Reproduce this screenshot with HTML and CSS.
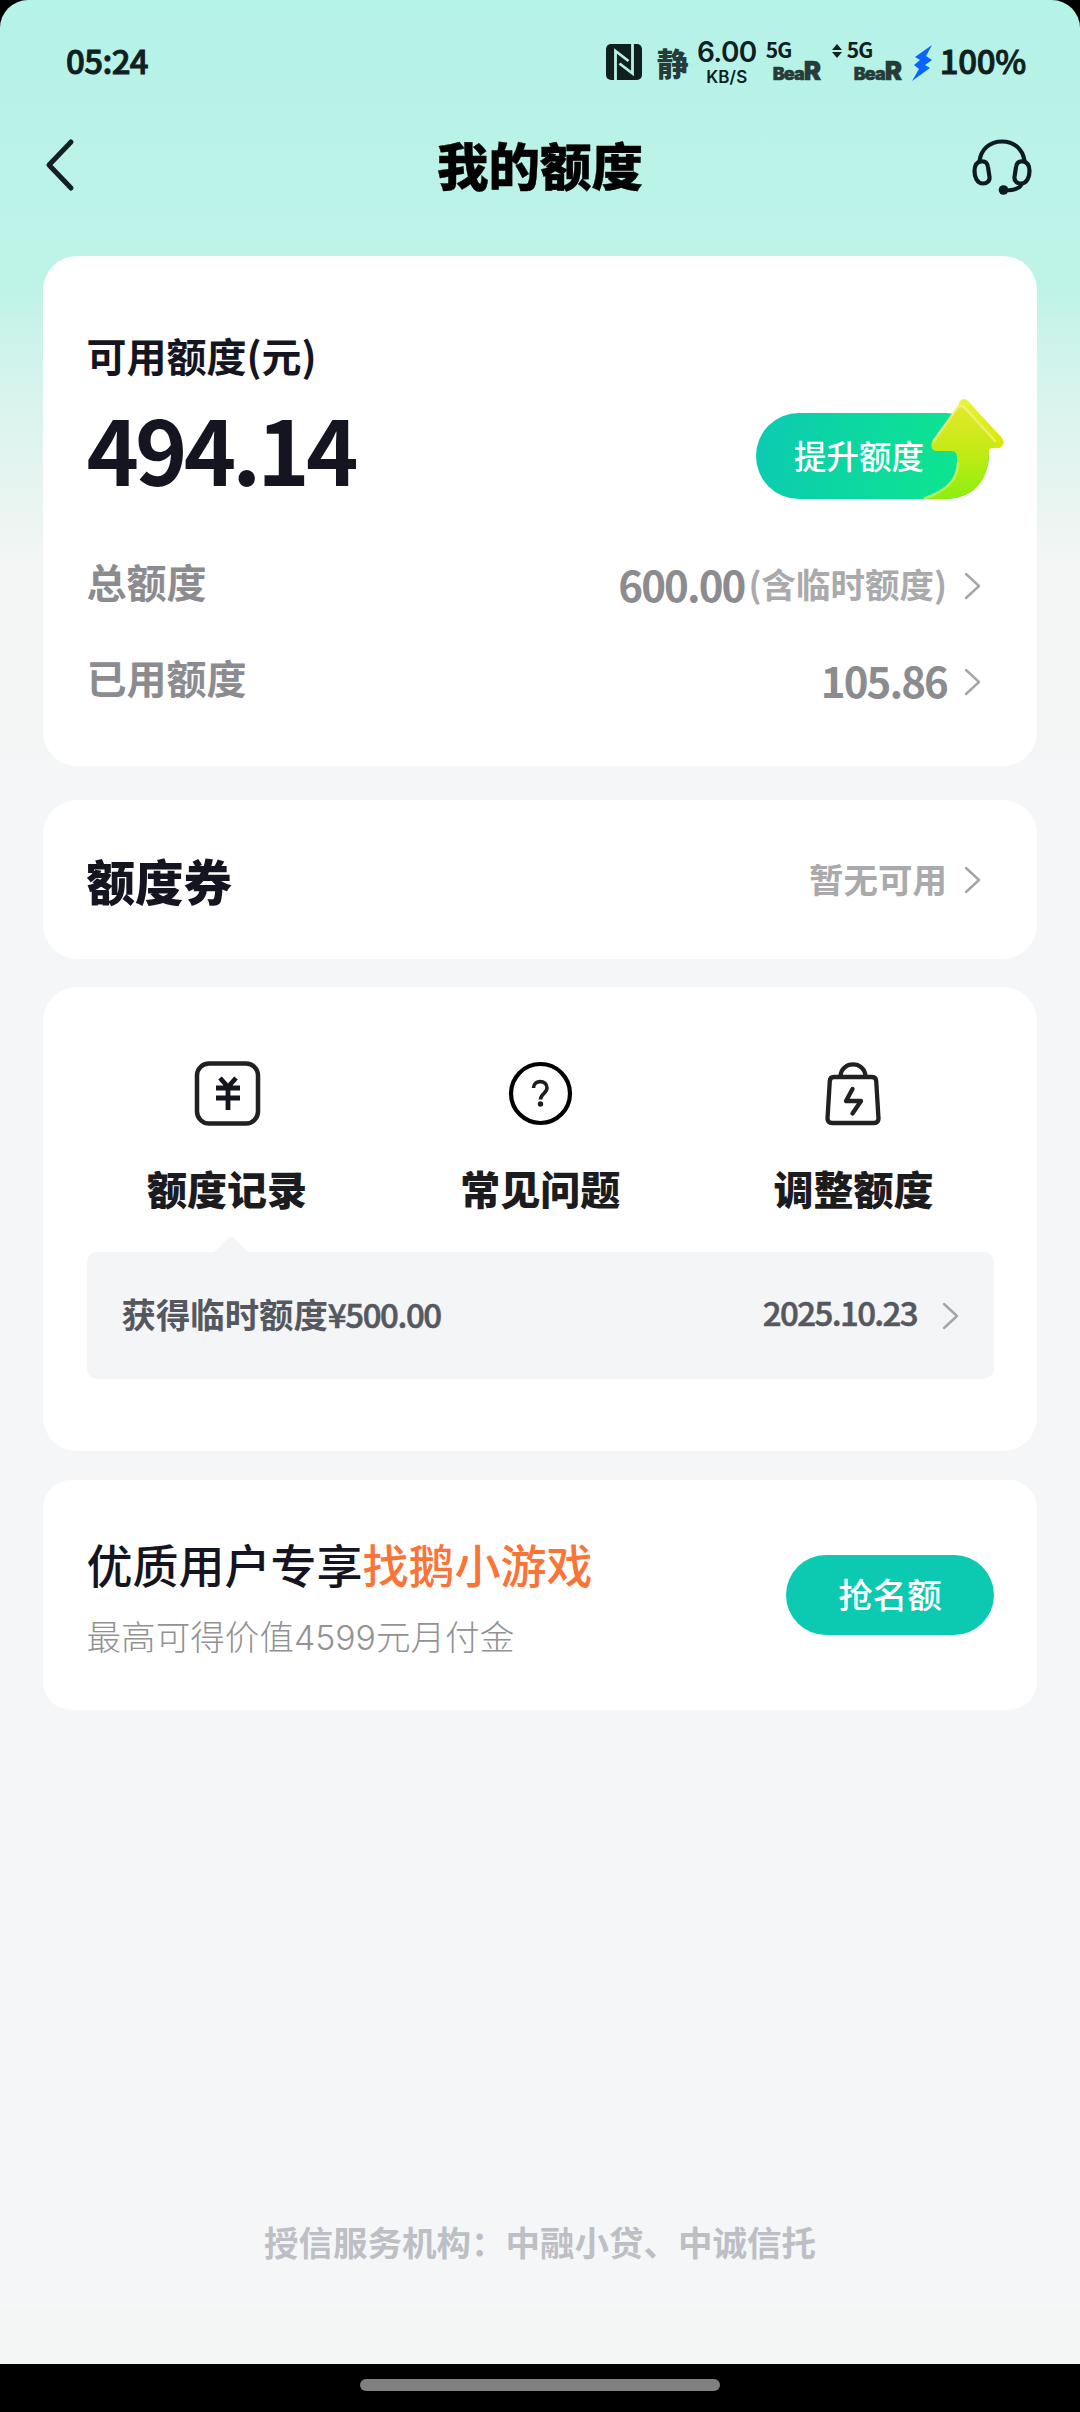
FILE: index.html
```html
<!DOCTYPE html>
<html lang="zh-CN">
<head>
<meta charset="utf-8">
<title>我的额度</title>
<link rel="stylesheet" href="styles.css">
</head>
<body>
<svg class="defs" width="0" height="0">
  <symbol id="chev" viewBox="0 0 17 28"><path d="M2 2 15 14 2 26" fill="none" stroke="#a5a5a8" stroke-width="2.4" stroke-linecap="round" stroke-linejoin="round"/></symbol>
</svg>
<div class="screen">
  <div class="page">
    <div class="status">
      <span class="clock">05:24</span>
      <div class="indicators">
        <svg class="nfc" viewBox="0 0 36 36"><rect width="36" height="36" rx="5" fill="#10201f"/><path d="M9.500 36V7L22.500 17M26.500 0V29.500L13.500 19.500" fill="none" stroke="#b7f2e7" stroke-width="2.800"/></svg>
        <span class="silent">静</span>
        <div class="speed"><span class="num">6.00</span><span class="unit">KB/S</span></div>
        <div class="sim"><span class="net">5G</span><span class="carrier">Bea<b>R</b></span></div>
        <svg class="updown" viewBox="0 0 10 14"><path d="M5 0 10 6H0ZM5 14 0 8H10Z" fill="#10201f"/></svg>
        <div class="sim"><span class="net">5G</span><span class="carrier">Bea<b>R</b></span></div>
        <svg class="bolt" viewBox="0 0 20 36"><path d="M20 0 3 12 8 15 2 20 7 24 0 36 18 23 13 20 20 15 14 11Z" fill="#0a64ff"/></svg>
        <span class="battery">100%</span>
      </div>
    </div>
    <header class="nav">
      <svg class="back" viewBox="0 0 28 52"><path d="M25 3 3 26 25 49" fill="none" stroke="#14201f" stroke-width="5" stroke-linecap="round" stroke-linejoin="round"/></svg>
      <h1>我的额度</h1>
      <svg class="headset" viewBox="0 0 60 56"><g fill="none" stroke="#0e1a22" stroke-width="4.2" stroke-linecap="round" stroke-linejoin="round"><path d="M7.5 22C9 10 18 2.500 30 2.500S51 10 52.500 22"/><path d="M9 22.500C13 21.500 15.500 24 16 28L17.500 38C18 42 15 44.500 11 44.500 5 44.500 2.500 38 2.500 32 2.500 26 5 23 9 22.500Z"/><path d="M51 22.500C47 21.500 44.500 24 44 28L42.500 38C42 42 45 44.500 49 44.500 55 44.500 57.500 38 57.500 32 57.500 26 55 23 51 22.500Z"/><path d="M49.500 45C48 50 42 51.500 32 51.500"/></g><circle cx="31.500" cy="51" r="4.800" fill="#0e1a22"/></svg>
    </header>

    <main class="cards">
      <section class="card summary">
        <div class="label">可用额度(元)</div>
        <div class="hero">
          <div class="amount">494.14</div>
          <div class="raise">
            <span>提升额度</span>
            <svg class="arrow" viewBox="0 0 90 108">
              <defs>
                <linearGradient id="ag" x1="0" y1="0" x2="0" y2="1"><stop offset="0" stop-color="#e4e92a"/><stop offset=".5" stop-color="#c3ea14"/><stop offset="1" stop-color="#8bef10"/></linearGradient>
                <linearGradient id="ae" x1="0" y1="0" x2="1" y2="1"><stop offset="0" stop-color="#e6f53c"/><stop offset="1" stop-color="#dce600"/></linearGradient>
              </defs>
              <path d="M43 4Q47 0 51 4L85 41Q88 45 85 49Q83 52 79 51L69 49 40 12Z" fill="url(#ae)"/>
              <path d="M40 10Q44 6 48 10L80 45Q82 51 76 51L72 52C73 78 61 102 28 102H5C26 95 40 84 40 66V60Q40 54 34 54H19Q12 52 15 45Z" fill="url(#ag)"/>
              <path d="M16 45 40 11Q44 7 48 11L79 45" fill="none" stroke="#f3f38c" stroke-width="2.200" opacity=".8"/>
              <path d="M7 101.500C28 94 41 84 41 65" fill="none" stroke="#e0f884" stroke-width="2.500" opacity=".6"/>
            </svg>
          </div>
        </div>
        <div class="line first"><span class="name">总额度</span><div class="value"><span class="digits">600.00</span><span class="note">(含临时额度)</span><svg class="chev"><use href="#chev"/></svg></div></div>
        <div class="line"><span class="name">已用额度</span><div class="value"><span class="digits">105.86</span><svg class="chev"><use href="#chev"/></svg></div></div>
      </section>

      <section class="card coupon">
        <h2>额度券</h2>
        <div class="value"><span class="none">暂无可用</span><svg class="chev"><use href="#chev"/></svg></div>
      </section>

      <section class="card tools">
        <div class="tabs">
          <div class="tab">
            <svg viewBox="0 0 66 66"><rect x="3" y="2.500" width="61" height="60" rx="12" fill="none" stroke="#212121" stroke-width="4.500"/><path d="M26 17 34 26 42 17M22 27H46M22 37H46M34 26V49" fill="none" stroke="#15151f" stroke-width="4.800"/></svg>
            <span>额度记录</span>
          </div>
          <div class="tab">
            <svg viewBox="0 0 66 66"><circle cx="33.500" cy="32.500" r="29.500" fill="none" stroke="#000" stroke-width="4.200"/><path d="M26.500 27C26.500 18.500 40 18.500 40 27 40 32 33.500 33 33.500 38.500" fill="none" stroke="#1d1d24" stroke-width="3.600"/><circle cx="33.500" cy="43" r="2.700" fill="#1d1d24"/></svg>
            <span>常见问题</span>
          </div>
          <div class="tab">
            <svg viewBox="0 0 66 66"><g fill="none" stroke="#212121" stroke-width="4.300" stroke-linejoin="round" stroke-linecap="round"><path d="M14 16H52Q56 16 56.200 20L58.500 57.500Q58.500 62 54 62H12Q7.500 62 7.500 57.500L9.800 20Q10 16 14 16Z"/><path d="M20.500 15C21.500 -.5 44.500 -.5 45.500 15"/><path d="M32.500 28 26 40H41L32.500 52.500"/></g></svg>
            <span>调整额度</span>
          </div>
        </div>
        <div class="record">
          <svg class="caret" viewBox="0 0 36 17"><path d="M0 17 15.500 1.800Q18 -.5 20.500 1.800L36 17Z" fill="#f4f5f7"/></svg>
          <div class="what">获得临时额度<span class="sum">¥500.00</span></div>
          <div class="when"><span>2025.10.23</span><svg class="chev"><use href="#chev"/></svg></div>
        </div>
      </section>

      <section class="card promo">
        <div>
          <div class="headline">优质用户专享<em>找鹅小游戏</em></div>
          <div class="sub">最高可得价值<span>4599</span>元月付金</div>
        </div>
        <div class="grab">抢名额</div>
      </section>
    </main>
    <footer class="org">授信服务机构：中融小贷、中诚信托</footer>
    <div class="safe"></div>
  </div>
  <div class="homebar"><i></i></div>
</div>
</body>
</html>
```

FILE: styles.css
```css
* { box-sizing: border-box; margin: 0; padding: 0; }
body { width: 1080px; height: 2412px; overflow: hidden; background: #000; font-family: "Noto Sans CJK SC", "Noto Sans", sans-serif; font-weight: 700; color: #151521; white-space: nowrap; }
svg { display: block; flex: none; overflow: visible; }
.defs { position: absolute; }
.screen { height: 2412px; display: flex; flex-direction: column; }
.page { height: 2364px; border-radius: 28px 28px 0 0; overflow: hidden; display: flex; flex-direction: column; background: linear-gradient(#b5f2e7 0, #bff3e8 290px, #c8f3e9 320px, #dbf4ee 415px, #e9f4f1 500px, #f3f6f5 560px, #f3f6f5 740px, #f5f6f8 775px); }

.status { height: 110px; padding: 14px 54px 0 66px; display: flex; align-items: center; justify-content: space-between; color: #10201f; }
.clock, .battery { font-size: 33px; line-height: 50px; font-weight: 500; -webkit-text-stroke: .9px #10201f; padding-bottom: 4px; }
.clock { letter-spacing: -.6px; }
.battery { letter-spacing: -.3px; }
.indicators { display: flex; align-items: center; height: 50px; }
.nfc { width: 36px; height: 36px; }
.silent { font-size: 32px; font-weight: 900; line-height: 40px; margin-left: 15px; width: 32px; color: #263c39; }
.speed { width: 60px; height: 48px; margin-left: 8px; display: flex; flex-direction: column; align-items: center; justify-content: space-between; }
.num { font: 600 28px/28px Inter, sans-serif; letter-spacing: -.6px; }
.unit { font: 600 17px/17px Inter, sans-serif; letter-spacing: .1px; }
.sim { width: 56px; height: 46px; margin-left: 9px; display: flex; flex-direction: column; justify-content: space-between; }
.net { font: 700 21px/21px "Noto Sans CJK SC", sans-serif; letter-spacing: -1px; }
.carrier { font: 900 18px/22px Inter, sans-serif; letter-spacing: -1px; margin-left: 7px; color: #263c39; -webkit-text-stroke: .5px #263c39; }
.carrier b { font-size: 26px; font-weight: 900; }
.updown { width: 10px; height: 14px; margin: 0 -4px 22px 10px; }
.bolt { width: 20px; height: 36px; margin: 2px 8px 0 9px; }

.nav { height: 146px; padding: 0 48px 37px 46px; display: flex; align-items: center; justify-content: space-between; }
.back { width: 28px; height: 52px; }
.headset { width: 60px; height: 56px; margin-top: 4px; }
h1 { font-size: 51.500px; font-weight: 900; line-height: 70px; color: #000; margin: 0 0 2px 34px; -webkit-text-stroke: .4px #000; }

.cards { padding: 0 43px; }
.card { background: #fff; border-radius: 34px; padding: 0 43px 0 43.500px; }
.summary { height: 510px; padding-top: 70px; }
.label { font-size: 40px; line-height: 58px; }
.hero { height: 120px; display: flex; justify-content: space-between; }
.amount { font-size: 89px; line-height: 118px; letter-spacing: -3.900px; margin-top: 5px; }
.raise { position: relative; width: 233px; height: 86px; margin-top: 29px; margin-right: 5px; border-radius: 43px; background: linear-gradient(100deg, #0ccab2, #0de391 80%); color: #fff; font-size: 32.500px; font-weight: 500; line-height: 84px; padding-left: 38px; }
.arrow { position: absolute; left: 161px; top: -16px; width: 90px; height: 108px; }
.line { height: 96px; display: flex; align-items: center; justify-content: space-between; color: #8b8b90; }
.first { margin-top: 31px; }
.name { font-size: 40px; padding-bottom: 4px; }
.value { display: flex; align-items: center; padding-right: 13px; }
.digits { font-size: 42px; letter-spacing: -1.900px; }
.note { font-size: 34.500px; color: #aaaaad; margin-left: 4px; }
.chev { width: 17px; height: 28px; margin-left: 17px; }
.line .chev { margin-top: 5px; }

.coupon { height: 159px; margin-top: 34px; display: flex; align-items: center; justify-content: space-between; }
h2 { font-size: 48.500px; font-weight: 900; line-height: 70px; }
.none { font-size: 34.500px; line-height: 50px; color: #aaaaad; padding-bottom: 3px; }

.tools { height: 464px; margin-top: 28px; padding-top: 73px; }
.tabs { display: flex; margin: 0 -16px; }
.tab { flex: 1; display: flex; flex-direction: column; align-items: center; font-size: 40px; font-weight: 900; line-height: 58px; color: #1c1c1f; }
.tab svg { width: 66px; height: 66px; margin: 1px 0 32px; }
.record { position: relative; height: 127px; margin-top: 35px; border-radius: 10px; background: #f4f5f7; padding: 0 35px; display: flex; align-items: center; justify-content: space-between; color: #56585f; font-size: 34.400px; }
.what { padding-bottom: 5px; }
.caret { position: absolute; left: 126px; top: -16px; width: 36px; height: 17px; }
.sum, .when span { font-size: 33px; font-weight: 500; letter-spacing: -1.400px; -webkit-text-stroke: .6px #56585f; }
.when span { padding-bottom: 7px; letter-spacing: -1.600px; }
.when { display: flex; align-items: center; }
.when .chev { margin-left: 25px; }

.promo { height: 230px; margin-top: 29px; padding-top: 3px; border-radius: 28px; display: flex; align-items: center; justify-content: space-between; }
.headline { font-size: 46px; line-height: 66px; font-weight: 500; }
.headline em { font-style: normal; color: #fa7437; }
.sub { font-size: 34.600px; line-height: 50px; font-weight: 300; color: #929292; margin-top: 14px; }
.sub span { font-family: Inter, sans-serif; font-size: 33.800px; }
.grab { width: 208px; height: 80px; margin-bottom: 3px; border-radius: 40px; background: #0ccab2; color: #fff; font-size: 34.500px; font-weight: 500; line-height: 77px; text-align: center; }

.org { margin-top: auto; height: 50px; margin-bottom: 42px; text-align: center; font-size: 34.500px; line-height: 50px; color: #bdbfc5; }
.safe { height: 56px; background: #f3f6f5; flex: none; }
.homebar { height: 48px; background: #000; display: flex; justify-content: center; padding-top: 15px; }
.homebar i { width: 360px; height: 12px; border-radius: 6px; background: #808080; }
```
